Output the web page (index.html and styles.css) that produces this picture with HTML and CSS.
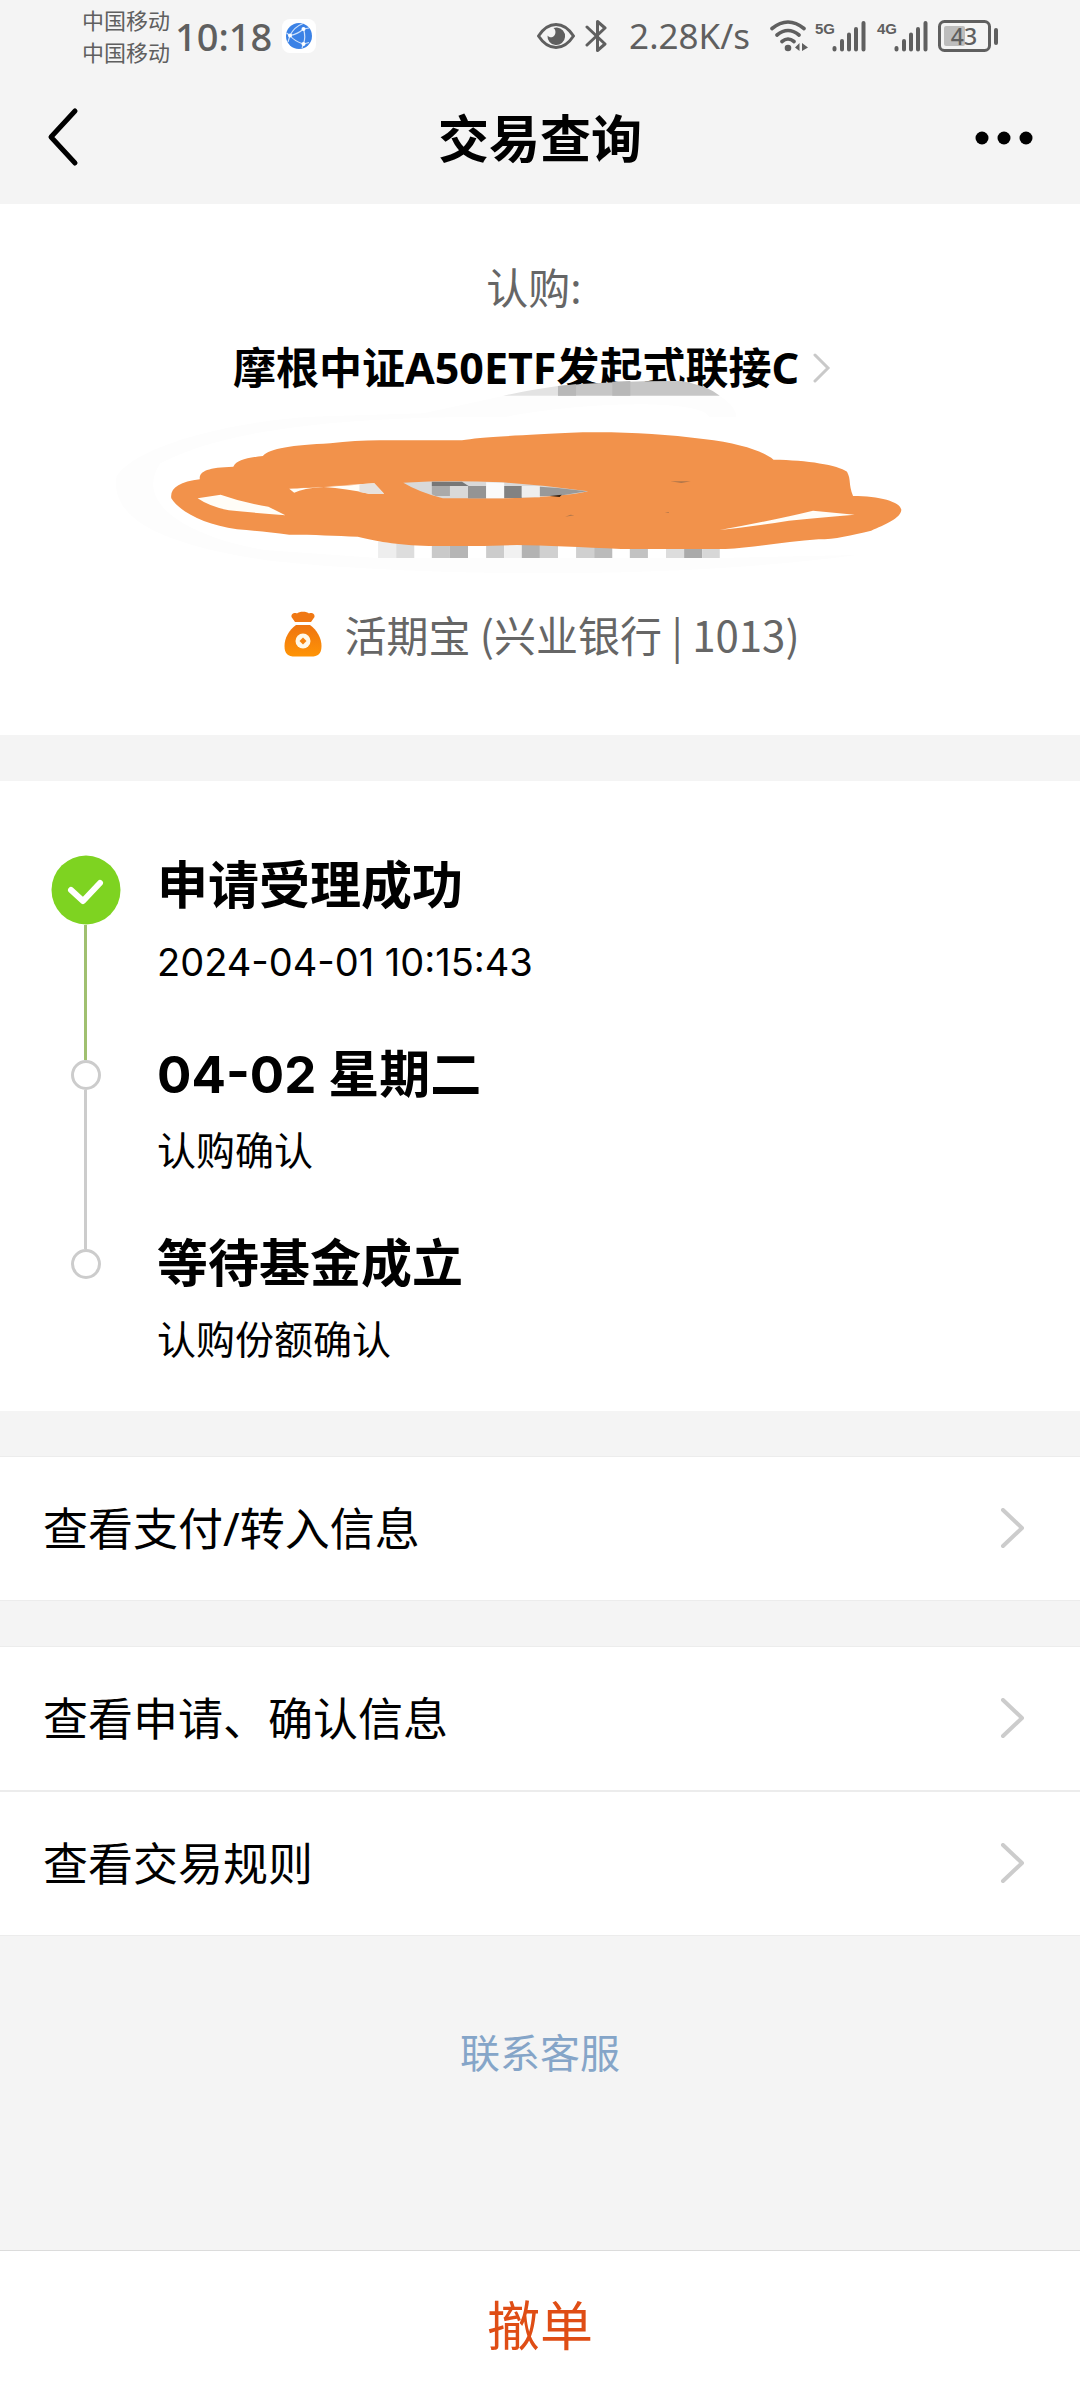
FILE: index.html
```html
<!DOCTYPE html>
<html lang="zh-CN">
<head>
<meta charset="utf-8">
<meta name="viewport" content="width=device-width, initial-scale=1">
<title>交易查询</title>
<link rel="stylesheet" href="styles.css">
</head>
<body>
<div class="statusbar">
  <div class="carriers"><span>中国移动</span><span>中国移动</span></div>
  <span class="clock">10:18</span>
  <svg class="app-icon" width="34" height="34" viewBox="0 0 34 34" aria-hidden="true">
    <rect width="34" height="34" rx="8" fill="#fff"/>
    <circle cx="17" cy="17" r="13" fill="#3b82e6"/>
    <path d="M21 4.500Q12 8 8 16.500M8 16.500Q12 22 21.500 25M21.500 10Q24 18 21.500 25M8 16.500Q16 15 21.500 10M4.500 14L8 16.500L6 23M21.500 10L27 9M21.500 25L27 23.500M21.500 25L20 29" fill="none" stroke="#cfe2fb" stroke-width="1.200"/>
    <circle cx="8" cy="16.500" r="2" fill="#fff"/><circle cx="21.500" cy="10" r="2" fill="#fff"/><circle cx="21.500" cy="25" r="2" fill="#fff"/>
  </svg>
  <div class="indicators">
    <svg width="38" height="26" viewBox="0 0 38 26" aria-hidden="true">
      <path d="M1.500 13Q9 1.500 19 1.500T36.500 13Q29 24.500 19 24.500T1.500 13Z" fill="none" stroke="#5f5f5f" stroke-width="3" stroke-linejoin="round"/>
      <path d="M20 4.500a8.800 8.800 0 1 1-9.500 8c1.500 2 4.500 2.500 6.500.5 2.200-2.200 1.800-6.500-.5-8a9 9 0 0 1 3.500-.5Z" fill="#5f5f5f"/>
    </svg>
    <svg width="22" height="34" viewBox="0 0 22 34" aria-hidden="true">
      <path d="M2 8L20 25L12.500 31.500V2.500L20 9L2 26" fill="none" stroke="#5f5f5f" stroke-width="3" stroke-linecap="round" stroke-linejoin="round"/>
    </svg>
    <span class="speed">2.28K/s</span>
    <svg class="wifi" width="38" height="32" viewBox="0 0 38 32" aria-hidden="true">
      <path d="M2 8.500Q18 -4.500 34 8.500M7 15Q18 6 29 15M12 21.500Q18 16.500 24 21.500" fill="none" stroke="#5f5f5f" stroke-width="3.600" stroke-linecap="round"/>
      <circle cx="18" cy="28" r="3.300" fill="#5f5f5f"/>
      <path d="M25 27.500L29.500 23V31ZM38 27.500L32 23V31Z" fill="#5f5f5f"/>
    </svg>
    <svg class="signal" width="52" height="36" viewBox="0 -2 52 36" aria-hidden="true">
      <text class="net" x="1" y="14">5G</text>
      <path d="M20.500 29.500V28M28 29.500V21M35 29.500V14.500M42 29.500V9M49.500 29.500V3" stroke="#5f5f5f" stroke-width="4" stroke-linecap="round"/>
    </svg>
    <svg class="signal" width="52" height="36" viewBox="0 -2 52 36" aria-hidden="true">
      <text class="net" x="1" y="14">4G</text>
      <path d="M20.500 29.500V28M28 29.500V21M35 29.500V14.500M42 29.500V9M49.500 29.500V3" stroke="#5f5f5f" stroke-width="4" stroke-linecap="round"/>
    </svg>
    <svg class="battery" width="60" height="32" viewBox="0 0 60 32" aria-hidden="true">
      <rect x="1.500" y="1.500" width="50" height="29" rx="5" fill="none" stroke="#5f5f5f" stroke-width="3"/>
      <rect x="6" y="6" width="21" height="20" rx="2" fill="#bdbdbd"/>
      <rect x="56" y="8" width="4" height="17" rx="2" fill="#5f5f5f"/>
      <text class="level" x="26" y="25" text-anchor="middle">43</text>
    </svg>
  </div>
</div>

<header class="navbar">
  <button class="icon-button" type="button" aria-label="返回">
    <svg width="32" height="62" viewBox="0 0 32 62"><path d="M28 4L4 30L28 56" fill="none" stroke="#000" stroke-width="5" stroke-linecap="round" stroke-linejoin="round"/></svg>
  </button>
  <h1 class="page-title">交易查询</h1>
  <button class="icon-button" type="button" aria-label="更多">
    <svg width="58" height="14" viewBox="0 0 58 14"><circle cx="7" cy="7" r="6.500"/><circle cx="29" cy="7" r="6.500"/><circle cx="51" cy="7" r="6.500"/></svg>
  </button>
</header>

<main class="content">
  <section class="summary">
    <p class="kind">认购:</p>
    <a class="fund" href="#fund"><span>摩根中证A50ETF发起式联接C</span>
      <svg width="18" height="30" viewBox="0 0 18 30" aria-hidden="true"><path d="M2 2L15 15L2 28" fill="none" stroke="#c9c9c9" stroke-width="3" stroke-linecap="round"/></svg>
    </a>
    <svg class="scribble" viewBox="0 0 1568 990" preserveAspectRatio="none" aria-hidden="true">
      <path d="M590 490L735 438H1130Q1160 470 1160 500H1110C1100 450 900 450 740 500C500 500 250 520 110 640C60 760 160 860 300 900L507 924H1130L1380 915C1000 1000 500 970 300 930C100 880 20 800 30 680C60 590 250 500 440 497Z" fill="#fdfdfd"/>
      <path d="M735 437Q790 418 835 408V437Z" fill="#e3e3e3"/>
      <path d="M835 408Q940 392 1060 393Q1105 405 1130 437H835Z" fill="#c6c6c6"/>
      <path d="M835 408L868 403V437H835ZM934 395L967 393V437H934Z" fill="#b8b8b8"/>
      <g>
        <path d="M507 875h33v49h-33z" fill="#eee"/><path d="M540 875h33v49h-33z" fill="#ddd"/><path d="M605 875h33v49h-33z" fill="#c9c9c9"/><path d="M638 875h33v49h-33z" fill="#b5b5b5"/><path d="M704 875h33v49h-33z" fill="#ccc"/><path d="M737 875h32v49h-32z" fill="#f1f1f1"/><path d="M769 875h33v49h-33z" fill="#b3b3b3"/><path d="M802 875h33v49h-33z" fill="#d0d0d0"/><path d="M868 875h33v49h-33z" fill="#d0d0d0"/><path d="M901 875h33v49h-33z" fill="#bbb"/><path d="M966 875h33v49h-33z" fill="#c2c2c2"/><path d="M1032 875h33v49h-33z" fill="#ddd"/><path d="M1065 875h33v49h-33z" fill="#aaa"/><path d="M1098 875h32v49h-32z" fill="#d7d7d7"/>
      </g>
      <path fill="#f2924b" d="M182 688C180 665 195 652 243 650C250 630 265 624 297 618C310 595 350 586 420 580C450 574 480 572 510 571H660C690 562 740 558 880 547C960 545 1030 552 1100 567C1170 580 1210 605 1228 629C1290 630 1345 645 1362 665C1370 690 1364 700 1373 738C1420 738 1460 755 1461 780C1460 805 1430 825 1406 842C1370 856 1340 868 1310 868C1250 875 1190 893 1140 897H950C880 892 810 886 760 885L700 888H600C540 885 500 872 470 860C430 857 390 854 345 854C310 847 280 842 250 838C190 824 145 785 130 745C127 715 145 695 182 688Z"/>
      <path fill="#fffdf7" d="M178 745L220 734Q265 760 307 770L338 796Q280 788 235 781Q200 770 178 745ZM345 716L500 700L518 731H490Q450 716 408 711Q370 715 354 728ZM1130 840Q1230 810 1300 782L1376 794Q1310 803 1256 812Q1190 830 1130 840Z"/>
      <path fill="#f2924b" d="M345 716Q400 706 470 704L408 711Z"/>
      <path fill="#e6e2df" d="M473 703L500 700L518 731H490L473 726Z"/>
      <path fill="#d9d9d9" d="M553 698Q640 690 730 697Q810 705 890 724Q850 740 740 745H625Q580 725 553 698Z"/>
      <path fill="#777" d="M605 695H660L672 708H605Z"/><path fill="#aaa" d="M605 708H638V738H612L605 733Z"/><path fill="#949494" d="M671 708H704V745H671Z"/><path fill="#fafafa" d="M704 697L737 698V745H704Z"/><path fill="#828282" d="M737 708H769V744H737Z"/><path fill="#eee" d="M769 708H802V742H769Z"/><path fill="#999" d="M802 710L835 714L888 724L835 738H802Z"/><path fill="#35200f" d="M820 738L842 734L838 741Z"/>
      <path fill="#ae754a" d="M1040 694H1077L1060 699ZM848 800L858 794L865 796ZM1030 787L1037 786V789Z"/>
    </svg>
    <p class="account">
      <svg width="38" height="46" viewBox="0 0 38 46" aria-hidden="true">
        <defs><linearGradient id="bag" x1="0" y1="0" x2="0" y2="1"><stop offset="0" stop-color="#ee7410"/><stop offset="1" stop-color="#ff9406"/></linearGradient></defs>
        <path d="M11 11L7.500 6C7 2 11 1.500 13 2.500C15 0 23 0 25 2.500C27 1.500 31 2 30.500 6L27 11Z" fill="#f07814"/>
        <path d="M12 14H26C33 19 37.500 27 37.500 35C37.500 43 34 45.500 27 45.500H11C4 45.500 .5 43 .5 35C.5 27 5 19 12 14Z" fill="url(#bag)"/>
        <circle cx="19" cy="30" r="7.500" fill="#fff8e8"/><path d="M19 26.500L22.500 30L19 33.500L15.500 30Z" fill="#f5820c"/>
      </svg>
      <span>活期宝 (兴业银行 | 1013)</span>
    </p>
  </section>

  <ol class="timeline">
    <li class="step done">
      <div class="rail">
        <svg class="check" width="70" height="70" viewBox="0 0 70 70" aria-hidden="true"><circle cx="35" cy="35" r="34.500" fill="#7ed321"/><path d="M20 35L32 46L49 28" fill="none" stroke="#fff" stroke-width="6" stroke-linecap="round" stroke-linejoin="round"/></svg>
      </div>
      <div class="detail"><h2>申请受理成功</h2><p><time>2024-04-01 10:15:43</time></p></div>
    </li>
    <li class="step">
      <div class="rail"><span class="dot"></span></div>
      <div class="detail"><h2>04-02 星期二</h2><p>认购确认</p></div>
    </li>
    <li class="step">
      <div class="rail"><span class="dot"></span></div>
      <div class="detail"><h2>等待基金成立</h2><p>认购份额确认</p></div>
    </li>
  </ol>

  <nav class="links">
    <a href="#payment"><span>查看支付/转入信息</span><svg width="26" height="42" viewBox="0 0 26 42" aria-hidden="true"><path d="M3 2L22 20L3 38"/></svg></a>
  </nav>
  <nav class="links">
    <a href="#confirm"><span>查看申请、确认信息</span><svg width="26" height="42" viewBox="0 0 26 42" aria-hidden="true"><path d="M3 2L22 20L3 38"/></svg></a>
    <a href="#rules"><span>查看交易规则</span><svg width="26" height="42" viewBox="0 0 26 42" aria-hidden="true"><path d="M3 2L22 20L3 38"/></svg></a>
  </nav>
  <a class="support" href="#support">联系客服</a>
</main>

<footer class="actions"><button class="cancel" type="button">撤单</button></footer>
</body>
</html>
```
FILE: styles.css
```css
* {
  box-sizing: border-box;
}

body {
  display: flex;
  flex-direction: column;
  min-height: 100vh;
  margin: 0;
  background: #f4f4f4;
  color: #000;
  font-family: "Noto Sans", "Noto Sans CJK SC", sans-serif;
}

h1,
h2,
p,
ol {
  margin: 0;
  padding: 0;
}

svg {
  flex: none;
  display: block;
}

a {
  color: inherit;
  text-decoration: none;
}

button {
  border: 0;
  background: none;
  font-family: inherit;
}

/* Status bar */
.statusbar {
  display: flex;
  align-items: center;
  height: 72px;
  padding: 0 82px;
  color: #5f5f5f;
  white-space: nowrap;
}

.carriers {
  display: flex;
  flex-direction: column;
  font-size: 22px;
  line-height: 32px;
}

.clock {
  margin: 0 10px 0 5px;
  font-size: 38px;
  font-weight: 500;
  line-height: 72px;
}

.indicators {
  display: flex;
  align-items: center;
  gap: 10px;
  margin-left: auto;
}

.speed {
  margin: 0 10px 0 12px;
  font-size: 35px;
  line-height: 72px;
}

.wifi {
  margin-right: -4px;
}

.net {
  fill: #5f5f5f;
  font: 700 15px "Liberation Sans", sans-serif;
}

.level {
  fill: #5f5f5f;
  font: 500 23px "Noto Sans", sans-serif;
}

/* Navigation bar */
.navbar {
  display: flex;
  align-items: center;
  justify-content: space-between;
  height: 132px;
  padding: 0 47px;
}

.icon-button {
  display: flex;
  align-items: center;
  width: 60px;
  height: 80px;
  padding: 0;
}

.icon-button:last-child {
  justify-content: flex-end;
}

.page-title {
  font-size: 51px;
  line-height: 72px;
}

/* Order summary */
.summary {
  position: relative;
  display: flex;
  flex-direction: column;
  align-items: center;
  padding: 44px 0 61px;
  background: #fff;
}

.kind {
  padding-right: 12px;
  color: #666;
  font-size: 42px;
  line-height: 80px;
}

.fund {
  display: flex;
  align-items: center;
  gap: 14px;
  padding-right: 16px;
  font-size: 43px;
  font-weight: 700;
  line-height: 80px;
}

.account {
  display: flex;
  align-items: center;
  gap: 22px;
  margin-top: 186px;
  padding-left: 4px;
  color: #666;
  font-family: "Noto Sans CJK SC", sans-serif;
  font-size: 42px;
  line-height: 80px;
}

.scribble {
  position: absolute;
  top: 46px;
  left: 50%;
  width: 860px;
  height: 330px;
  margin-left: -440px;
  pointer-events: none;
}

/* Progress timeline */
.timeline {
  margin-top: 46px;
  padding: 67px 50px 33px;
  background: #fff;
  font-family: Inter, "Noto Sans CJK SC", sans-serif;
  list-style: none;
}

.step {
  display: flex;
  gap: 36px;
}

.rail {
  display: flex;
  flex-direction: column;
  align-items: center;
  width: 71px;
  padding-top: 23px;
}

.rail::after {
  content: "";
  flex: 1;
  width: 3px;
  margin-bottom: -23px;
  background: #ccc;
}

.done .rail {
  padding-top: 7px;
}

.done .rail::after {
  background: #a0c070;
}

.step:last-child .rail::after {
  display: none;
}

.dot {
  width: 30px;
  height: 30px;
  border: 3px solid #ccc;
  border-radius: 50%;
}

.detail {
  padding-bottom: 37px;
}

.step:last-child .detail {
  padding-bottom: 0;
}

.detail h2 {
  font-size: 51px;
  line-height: 76px;
}

.detail p {
  font-size: 39px;
  line-height: 76px;
}

.detail time {
  font-size: 38px;
}

/* Link rows */
.links {
  margin-top: 45px;
  border: solid #ececec;
  border-width: 1px 0;
  background: #fff;
}

.links a {
  display: flex;
  align-items: center;
  justify-content: space-between;
  padding: 0 54px 0 43px;
  font-size: 45px;
  line-height: 143px;
}

.links a + a {
  border-top: 2px solid #ececec;
}

.links path {
  fill: none;
  stroke: #ccc;
  stroke-width: 4px;
  stroke-linecap: round;
  stroke-linejoin: round;
}

.support {
  display: block;
  width: fit-content;
  margin: 77px auto 60px;
  color: #85a5c8;
  font-size: 40px;
  line-height: 80px;
}

/* Bottom action */
.actions {
  margin-top: auto;
  border-top: 1px solid #dcdcdc;
  background: #fff;
}

.cancel {
  display: block;
  width: 100%;
  padding: 0;
  color: #df4d15;
  font-size: 53px;
  line-height: 149px;
}
```
